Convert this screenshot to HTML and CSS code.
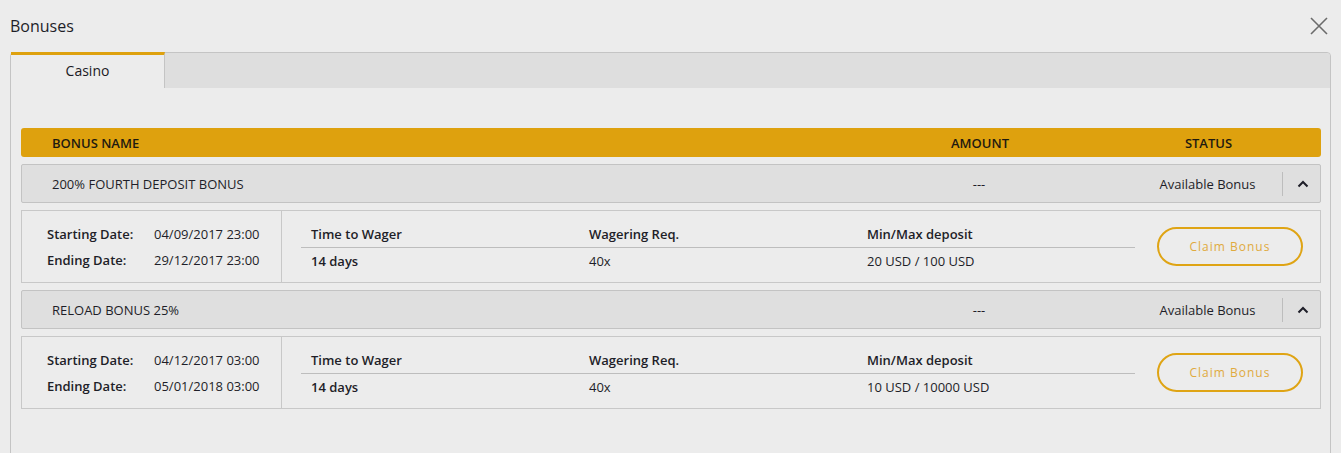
FILE: index.html
```html
<!DOCTYPE html>
<html lang="en">
<head>
    <meta charset="UTF-8">
    <title>Bonuses</title>
    <link rel="stylesheet" href="styles.css">
</head>
<body>
    <div class="modal-head">
        <h1 class="modal-title">Bonuses</h1>
        <button class="close-btn" aria-label="Close">
            <svg width="18" height="18" viewBox="0 0 18 18"><path d="M1 1L17 17M17 1L1 17" stroke="#6b6b6b" stroke-width="1.6" fill="none"/></svg>
        </button>
    </div>

    <div class="panel">
        <div class="tabs">
            <div class="tab active">Casino</div>
        </div>

        <div class="panel-body">
            <div class="bonus-grid table-head">
                <div class="col-name">BONUS NAME</div>
                <div class="col-center">AMOUNT</div>
                <div class="col-center">STATUS</div>
                <div></div>
            </div>

            <div class="bonus-grid bonus-row">
                <div class="col-name">200% FOURTH DEPOSIT BONUS</div>
                <div class="col-center">---</div>
                <div class="col-center">Available Bonus</div>
                <div class="toggle">
                    <span class="toggle-line"></span>
                    <svg width="12" height="8" viewBox="0 0 12 8"><path d="M1.5 6.5L6 2L10.5 6.5" stroke="#1e1e28" stroke-width="2" fill="none"/></svg>
                </div>
            </div>
            <div class="bonus-details">
                <div class="dates">
                    <div class="date-line"><span class="date-label">Starting Date:</span><span>04/09/2017 23:00</span></div>
                    <div class="date-line"><span class="date-label">Ending Date:</span><span>29/12/2017 23:00</span></div>
                </div>
                <div class="terms">
                    <div class="terms-grid">
                        <div class="term-head">Time to Wager</div>
                        <div class="term-head">Wagering Req.</div>
                        <div class="term-head">Min/Max deposit</div>
                        <div class="term-val strong">14 days</div>
                        <div class="term-val">40x</div>
                        <div class="term-val">20 USD / 100 USD</div>
                    </div>
                    <button class="claim-btn">Claim Bonus</button>
                </div>
            </div>

            <div class="bonus-grid bonus-row">
                <div class="col-name">RELOAD BONUS 25%</div>
                <div class="col-center">---</div>
                <div class="col-center">Available Bonus</div>
                <div class="toggle">
                    <span class="toggle-line"></span>
                    <svg width="12" height="8" viewBox="0 0 12 8"><path d="M1.5 6.5L6 2L10.5 6.5" stroke="#1e1e28" stroke-width="2" fill="none"/></svg>
                </div>
            </div>
            <div class="bonus-details">
                <div class="dates">
                    <div class="date-line"><span class="date-label">Starting Date:</span><span>04/12/2017 03:00</span></div>
                    <div class="date-line"><span class="date-label">Ending Date:</span><span>05/01/2018 03:00</span></div>
                </div>
                <div class="terms">
                    <div class="terms-grid">
                        <div class="term-head">Time to Wager</div>
                        <div class="term-head">Wagering Req.</div>
                        <div class="term-head">Min/Max deposit</div>
                        <div class="term-val strong">14 days</div>
                        <div class="term-val">40x</div>
                        <div class="term-val">10 USD / 10000 USD</div>
                    </div>
                    <button class="claim-btn">Claim Bonus</button>
                </div>
            </div>
        </div>
    </div>
</body>
</html>
```

FILE: styles.css
```css
html, body {
    height: 100%;
}
body {
    margin: 0;
    overflow: hidden;
    background-color: #ececec;
    color: #1e1e28;
    font-family: "Open Sans", Arial, sans-serif;
    font-size: 13px;
}

.modal-head {
    display: flex;
    align-items: center;
    justify-content: space-between;
    height: 52px;
    padding: 0 13px 0 10px;
}
.modal-title {
    margin: 0;
    font-size: 16px;
    font-weight: 400;
    line-height: 22px;
    color: #1e1e28;
}
.close-btn {
    display: flex;
    padding: 0;
    margin: 0;
    border: none;
    background: none;
    cursor: pointer;
}

.panel {
    margin: 0 10px;
    border: 1px solid #c4c4c4;
    border-radius: 4px 4px 0 0;
}
.tabs {
    display: flex;
    height: 35px;
    background-color: #dedede;
    border-radius: 4px 4px 0 0;
}
.tab {
    width: 153px;
    margin-top: -1px;
    border-top: 3px solid #dea10e;
    border-right: 1px solid #c4c4c4;
    background-color: #ececec;
    font-size: 14px;
    font-weight: 500;
    line-height: 31px;
    text-align: center;
    color: #1a1a24;
}

.panel-body {
    padding: 40px 9px 80px 10px;
}

.bonus-grid {
    display: grid;
    grid-template-columns: 1fr 308px 149px 38px;
    align-items: center;
}
.col-name {
    padding-left: 31px;
}
.col-center {
    text-align: center;
}

.table-head {
    height: 29px;
    margin-bottom: 7px;
    border-radius: 3px;
    background-color: #dea10e;
    font-weight: 600;
    color: #1e1a10;
}

.bonus-row {
    height: 37px;
    margin-bottom: 7px;
    border: 1px solid #c3c3c3;
    border-radius: 2px;
    background-color: #dfdfdf;
}
.bonus-row .col-name {
    padding-left: 30px;
}
.toggle {
    display: flex;
    align-items: center;
    height: 24px;
}
.toggle-line {
    width: 1px;
    height: 24px;
    background-color: #bdbdbd;
    margin-right: 14px;
}

.bonus-details {
    display: flex;
    height: 71px;
    margin-bottom: 7px;
    border: 1px solid #c8c8c8;
}
.dates {
    width: 234px;
    padding: 10px 0 0 25px;
    border-right: 1px solid #c8c8c8;
}
.date-line {
    display: flex;
    line-height: 26px;
}
.date-label {
    width: 107px;
    font-weight: 600;
}

.terms {
    display: flex;
    align-items: flex-start;
    padding-left: 19px;
}
.terms-grid {
    display: grid;
    grid-template-columns: repeat(3, 278px);
    padding-top: 14px;
}
.term-head {
    padding: 0 0 4px 10px;
    border-bottom: 1px solid #bdbdbd;
    font-weight: 600;
    line-height: 18px;
}
.term-val {
    padding: 4px 0 0 10px;
    line-height: 18px;
}
.term-val.strong {
    font-weight: 600;
}

.claim-btn {
    width: 146px;
    height: 39px;
    margin: 16px 0 0 22px;
    border: 2px solid #dfa414;
    border-radius: 20px;
    background: transparent;
    color: #e0aa3e;
    font-family: "Open Sans", Arial, sans-serif;
    font-size: 12px;
    letter-spacing: 1px;
    cursor: pointer;
}
```
